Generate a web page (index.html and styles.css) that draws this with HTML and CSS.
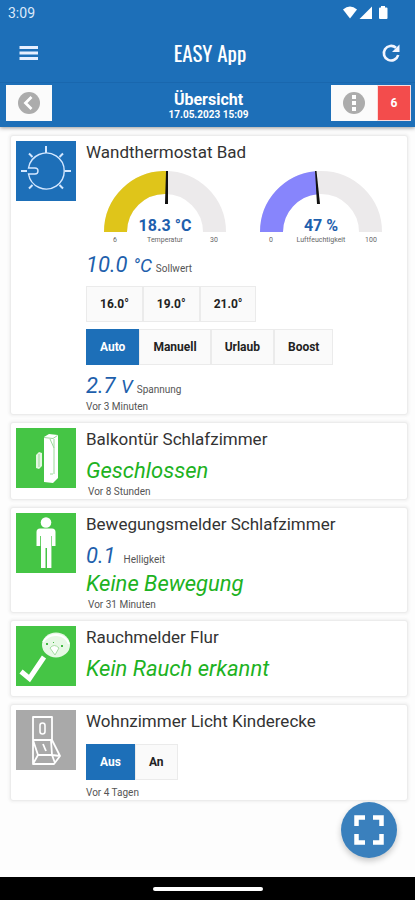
FILE: index.html
```html
<!DOCTYPE html>
<html lang="de">
<head>
<meta charset="utf-8">
<meta name="viewport" content="width=device-width, initial-scale=1">
<title>EASY App</title>
<link rel="stylesheet" href="styles.css">
</head>
<body>
<header class="header">
  <div class="status">
    <span>3:09</span>
    <svg class="status-icons" width="46" height="14" viewBox="0 0 46 14" fill="#fff" aria-hidden="true">
      <path d="M0 3.500Q7-2.500 14 3.500L7 12.500Z"/>
      <path d="M29 .5V13H16.500Z"/>
      <path d="M38 1.500V0h4v1.500h1.500q1 0 1 1V12q0 1-1 1H37q-1 0-1-1V2.500q0-1 1-1Z"/>
    </svg>
  </div>
  <div class="appbar">
    <button class="icon-button" aria-label="Menü">
      <svg width="20" height="16" viewBox="0 0 20 16" stroke="#e6efff" stroke-width="2.800"><path d="M.5 2.500h18.500M.5 8h18.500M.5 13.500h18.500"/></svg>
    </button>
    <h1 class="app-title">EASY App</h1>
    <button class="icon-button" aria-label="Aktualisieren">
      <svg width="20" height="20" viewBox="0 0 20 20" fill="none" stroke="#f1f5ff" stroke-width="2.600"><path d="M17.200 12A7.300 7.300 0 1 1 15 4.700"/><path d="M18.500 1.500v7.500h-7.500Z" fill="#f1f5ff" stroke="none"/></svg>
    </button>
  </div>
  <div class="subbar">
    <button class="tile-button" aria-label="Zurück">
      <svg width="24" height="24" viewBox="0 0 24 24"><circle cx="12" cy="12" r="11" fill="#acacac"/><path d="M14.500 6 8.500 12l6 6" fill="none" stroke="#fff" stroke-width="2.800"/></svg>
    </button>
    <div class="heading">
      <h2 class="page-title">Übersicht</h2>
      <time class="page-time">17.05.2023 15:09</time>
    </div>
    <div class="actions">
      <button class="tile-button" aria-label="Mehr">
        <svg width="24" height="24" viewBox="0 0 24 24"><circle cx="12" cy="12" r="11" fill="#acacac"/><path d="M10 4h4v4h-4zM10 10h4v4h-4zM10 16h4v4h-4z" fill="#fff"/></svg>
      </button>
      <button class="alerts">6</button>
    </div>
  </div>
</header>

<main class="cards">
  <article class="card">
    <svg class="tile blue" viewBox="0 0 60 60" fill="none" stroke="#d3e7ff" stroke-width="1.400" aria-hidden="true">
      <path d="M12.500 27A18 18 0 1 1 12.500 33H19q3 0 3-3t-3-3Z"/>
      <path stroke-width="2" d="M30 5v7M49 30h6M5 30h6M13 12.500l3.500 3.500M47 12.500 43.500 16M13 47.500l3.500-3.500M47 47.500 43.500 44"/>
    </svg>
    <div class="body">
      <h3 class="name">Wandthermostat Bad</h3>
      <div class="gauges">
        <svg class="gauge" viewBox="0 0 122 75">
          <path d="M11.500 61A49.500 49.500 0 0 1 110.500 61" fill="none" stroke="#eceaeb" stroke-width="23"/>
          <path d="M11.500 61A49.500 49.500 0 0 1 62.500 11.500" fill="none" stroke="#dfc51a" stroke-width="23"/>
          <path d="M62 0h2v33h-3z" fill="#111"/>
          <text class="reading" x="61" y="60">18.3 °C</text>
          <text class="scale" x="11" y="71">6</text><text class="scale" x="61" y="71">Temperatur</text><text class="scale" x="110" y="71">30</text>
        </svg>
        <svg class="gauge" viewBox="0 0 122 75">
          <path d="M11.500 61A49.500 49.500 0 0 1 110.500 61" fill="none" stroke="#eceaeb" stroke-width="23"/>
          <path d="M11.500 61A49.500 49.500 0 0 1 56.500 11.700" fill="none" stroke="#8785fc" stroke-width="23"/>
          <path d="M55 0h1.500l3.500 33h-3z" fill="#111"/>
          <text class="reading" x="61" y="60">47 %</text>
          <text class="scale" x="11" y="71">0</text><text class="scale" x="61" y="71">Luftfeuchtigkeit</text><text class="scale" x="111" y="71">100</text>
        </svg>
      </div>
      <p class="value"><em>10.0 <span class="unit">°C</span></em> <small>Sollwert</small></p>
      <div class="group">
        <button>16.0°</button><button>19.0°</button><button>21.0°</button>
      </div>
      <div class="group">
        <button class="active">Auto</button><button>Manuell</button><button>Urlaub</button><button>Boost</button>
      </div>
      <p class="value"><em>2.7 <span class="unit">V</span></em> <small>Spannung</small></p>
      <p class="age">Vor 3 Minuten</p>
    </div>
  </article>

  <article class="card">
    <svg class="tile green" viewBox="0 0 60 60" aria-hidden="true">
      <path d="M28 9l5-3 9 1v43l-5 5-9-1Z" fill="#fff"/>
      <path d="M28 9.500l9 1 4.500-3M38 11v9M34 11l4 9v26M34 46h3" fill="none" stroke="#9bd99a"/>
      <path d="M20 27l3-3 3 1v13l-3 3-3-1Z" fill="#e4f7e2"/><path d="M23 26v13" stroke="#9bd99a"/>
    </svg>
    <div class="body">
      <h3 class="name">Balkontür Schlafzimmer</h3>
      <p class="state">Geschlossen</p>
      <p class="age inset">Vor 8 Stunden</p>
    </div>
  </article>

  <article class="card">
    <svg class="tile green" viewBox="0 0 60 60" fill="#fff" aria-hidden="true">
      <circle cx="30" cy="9.500" r="5.300"/>
      <path d="M24 15.500h12q3.500 0 3.500 3.500v14h-3.500V23h-.6v32H31V35h-1.500v20H25V23h-.8v10h-3.700V19q0-3.500 3.500-3.500Z"/>
    </svg>
    <div class="body">
      <h3 class="name">Bewegungsmelder Schlafzimmer</h3>
      <p class="value"><em>0.1</em> <small class="spaced">Helligkeit</small></p>
      <p class="state">Keine Bewegung</p>
      <p class="age inset">Vor 31 Minuten</p>
    </div>
  </article>

  <article class="card">
    <svg class="tile green" viewBox="0 0 60 60" aria-hidden="true">
      <ellipse cx="40" cy="19" rx="14" ry="12.500" fill="#e7f8e5"/>
      <path d="M27 16Q32 8 41 9T53 18" fill="none" stroke="#fff" stroke-width="2"/>
      <path d="M34 22q4-5 9 0l-4 7Z" fill="#fff" stroke="#a7dda3"/>
      <path d="M30 17h2v2h-2zM45 19h2v2h-2zM37 16h1v1h-1z" fill="#45b944"/>
      <path d="M5 45.500l8.500 7L28 31" fill="none" stroke="#fff" stroke-width="5"/>
    </svg>
    <div class="body">
      <h3 class="name">Rauchmelder Flur</h3>
      <p class="state">Kein Rauch erkannt</p>
    </div>
  </article>

  <article class="card">
    <svg class="tile gray" viewBox="0 0 60 60" fill="none" stroke="#fff" stroke-width="1.800" stroke-linejoin="round" aria-hidden="true">
      <path d="M17 7h19v23H17ZM17 30l5 15h14l-1-15M36 30l8 16-6 8H17V30M22 45l-5 9M36 45l3 8M36 45l8 1"/>
      <rect x="24" y="13" width="5" height="11" rx="2.500" stroke-width="1.600"/><path d="M27 34l3 7"/>
    </svg>
    <div class="body">
      <h3 class="name">Wohnzimmer Licht Kinderecke</h3>
      <div class="group switch">
        <button class="active">Aus</button><button>An</button>
      </div>
      <p class="age">Vor 4 Tagen</p>
    </div>
  </article>
</main>

<button class="fab" aria-label="Vollbild">
  <svg width="30" height="30" viewBox="0 0 30 30" fill="none" stroke="#fff" stroke-width="4.500"><path d="M2.500 11V2.500H11M19 2.500h8.500V11M27.500 19v8.500H19M11 27.500H2.500V19"/></svg>
</button>
<footer class="navbar"><span class="handle"></span></footer>
</body>
</html>
```
FILE: styles.css
```css
* { box-sizing: border-box; }

body {
  margin: 0;
  min-height: 100vh;
  display: flex;
  flex-direction: column;
  background: #fdfdfd;
  color: #333;
  font-family: Roboto, "Liberation Sans", sans-serif;
}

h1, h2, h3, p { margin: 0; font-weight: 400; }

button {
  border: 0;
  padding: 0;
  font: inherit;
  color: inherit;
  background: none;
  cursor: pointer;
}

svg { display: block; }

.header {
  background: #1d6fb8;
  color: #fff;
  box-shadow: 0 1px 4px rgba(0, 0, 0, .4);
}

.status {
  display: flex;
  align-items: center;
  justify-content: space-between;
  height: 26px;
  padding: 0 26px 0 8px;
  font-size: 14px;
  color: #dce9fa;
}

.appbar {
  display: flex;
  align-items: center;
  justify-content: space-between;
  height: 56px;
  padding: 0 14px 3px 19px;
}

.icon-button { display: flex; }

.app-title {
  font: 400 21px/28px Oswald, "Roboto Condensed", "Liberation Sans Narrow", sans-serif;
}

.subbar {
  display: grid;
  grid-template-columns: 1fr auto 1fr;
  align-items: center;
  height: 45px;
  padding: 0 4px 4px 6px;
  border-top: 1px solid #1967ae;
}

.tile-button {
  display: flex;
  align-items: center;
  justify-content: center;
  width: 46px;
  height: 36px;
  background: #fbfbfb;
}

.heading { padding-top: 5px; text-align: center; }
.page-title { font-size: 16px; line-height: 18px; font-weight: 700; }
.page-time { display: block; font-size: 10px; line-height: 12px; font-weight: 700; }

.actions { display: flex; justify-content: flex-end; }

.alerts {
  width: 34px;
  border: 1px solid #fbdcdc;
  background: #f34c4c;
  font-size: 12px;
  font-weight: 700;
}

.cards {
  flex: 1;
  display: flex;
  flex-direction: column;
  gap: 7px;
  padding: 8px 7px 8px 10px;
}

.card {
  display: flex;
  align-items: flex-start;
  gap: 10px;
  min-height: 77px;
  padding: 5px 5px 0;
  border: 1px solid #ececec;
  border-radius: 3px;
  background: #fff;
  box-shadow: 0 0 3px 1px #f0f0f0;
}

.tile { flex: none; width: 60px; height: 60px; }
.blue { background: #1d6fb8; }
.green { background: #45c545; }
.gray { background: #a9a9a9; }

.body { flex: 1; min-width: 0; }
.name { font-size: 17px; line-height: 22px; margin-bottom: 7px; }

.gauges { display: flex; gap: 34px; padding: 1px 0 5px 18px; }
.gauge { width: 122px; height: 75px; }
.reading { font-size: 16px; font-weight: 700; fill: #1e60ad; text-anchor: middle; }
.scale { font-size: 7px; fill: #666; text-anchor: middle; }

.value { line-height: 28px; height: 28px; }
.value em { font-size: 22px; color: #1e5fac; }
.unit { font-size: 19px; }
.value small { font-size: 10px; color: #555; }
.value .spaced { margin-left: 4px; }

.state {
  font-size: 22px;
  line-height: 28px;
  font-style: italic;
  color: #1db222;
}

.age { font-size: 10px; line-height: 14px; color: #555; }
.inset { padding-left: 2px; }

.group { display: flex; width: max-content; margin: 7px 0; }
.group button {
  height: 36px;
  padding: 0 13px;
  border: 1px solid #ebebeb;
  background: #fafafa;
  color: #222;
  font-size: 12px;
  font-weight: 700;
}
.group .active { border-color: #1d6fb8; background: #1d6fb8; color: #fff; }
.switch { margin: 12px 0 6px; }

.fab {
  position: fixed;
  right: 18px;
  bottom: 42px;
  display: flex;
  align-items: center;
  justify-content: center;
  width: 56px;
  height: 56px;
  border-radius: 50%;
  background: #3a80bd;
  box-shadow: 0 3px 6px rgba(0, 0, 0, .22);
}

.navbar {
  display: flex;
  align-items: center;
  justify-content: center;
  height: 23px;
  background: #000;
}

.handle { width: 110px; height: 4px; border-radius: 2px; background: #fff; }
```
